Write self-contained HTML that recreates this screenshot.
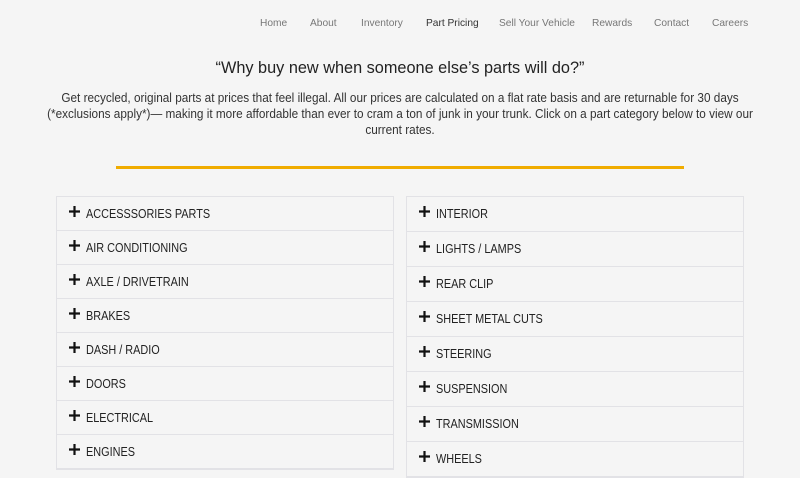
<!DOCTYPE html>
<html><head><meta charset="utf-8"><style>
*{margin:0;padding:0;box-sizing:border-box}
html,body{width:800px;height:450px;overflow:hidden;background:#f5f5f5;font-family:"Liberation Sans",sans-serif;color:#333}
.nav a{position:absolute;top:18px;font-size:10.2px;color:#777;text-decoration:none;white-space:nowrap}
h1{position:absolute;top:59px;left:0;width:800px;text-align:center;font-weight:normal;font-size:16.3px;color:#222}
p.intro{position:absolute;top:90px;left:0;width:800px;text-align:center;font-size:12.8px;line-height:16px;color:#333;white-space:nowrap;transform:scaleX(.92);transform-origin:400px 0}
.line{position:absolute;top:166px;left:116px;width:568px;height:3px;background:#f0ac00}
.col{position:absolute;top:196px;width:338px;border:1px solid #e2e2e6;background:#f5f5f5}
.row{border-bottom:1px solid #e2e2e6;position:relative;font-size:12.8px;color:#222;padding-left:29px}
.row span{display:inline-block;transform:scaleX(.85);transform-origin:left center}
.row svg{position:absolute;left:12px;top:50%;margin-top:-8px}
</style></head><body>
<div class="nav">
<a style="left:260px">Home</a><a style="left:310px">About</a><a style="left:361px">Inventory</a><a style="left:426px;color:#333">Part Pricing</a><a style="left:499px">Sell Your Vehicle</a><a style="left:592px">Rewards</a><a style="left:654px">Contact</a><a style="left:712px">Careers</a>
</div>
<h1>“Why buy new when someone else’s parts will do?”</h1>
<p class="intro">Get recycled, original parts at prices that feel illegal. All our prices are calculated on a flat rate basis and are returnable for 30 days<br>(*exclusions apply*)— making it more affordable than ever to cram a ton of junk in your trunk. Click on a part category below to view our<br>current rates.</p>
<div class="line"></div>
<div class="col" style="left:56px">
<div class="row" style="height:34px;line-height:33px"><svg width="11" height="11" viewBox="0 0 11 11"><path d="M5.5 0v11M0 5.5h11" stroke="#111" stroke-width="2.2"/></svg><span>ACCESSSORIES PARTS</span></div>
<div class="row" style="height:34px;line-height:33px"><svg width="11" height="11" viewBox="0 0 11 11"><path d="M5.5 0v11M0 5.5h11" stroke="#111" stroke-width="2.2"/></svg><span>AIR CONDITIONING</span></div>
<div class="row" style="height:34px;line-height:33px"><svg width="11" height="11" viewBox="0 0 11 11"><path d="M5.5 0v11M0 5.5h11" stroke="#111" stroke-width="2.2"/></svg><span>AXLE / DRIVETRAIN</span></div>
<div class="row" style="height:34px;line-height:33px"><svg width="11" height="11" viewBox="0 0 11 11"><path d="M5.5 0v11M0 5.5h11" stroke="#111" stroke-width="2.2"/></svg><span>BRAKES</span></div>
<div class="row" style="height:34px;line-height:33px"><svg width="11" height="11" viewBox="0 0 11 11"><path d="M5.5 0v11M0 5.5h11" stroke="#111" stroke-width="2.2"/></svg><span>DASH / RADIO</span></div>
<div class="row" style="height:34px;line-height:33px"><svg width="11" height="11" viewBox="0 0 11 11"><path d="M5.5 0v11M0 5.5h11" stroke="#111" stroke-width="2.2"/></svg><span>DOORS</span></div>
<div class="row" style="height:34px;line-height:33px"><svg width="11" height="11" viewBox="0 0 11 11"><path d="M5.5 0v11M0 5.5h11" stroke="#111" stroke-width="2.2"/></svg><span>ELECTRICAL</span></div>
<div class="row" style="height:34px;line-height:33px"><svg width="11" height="11" viewBox="0 0 11 11"><path d="M5.5 0v11M0 5.5h11" stroke="#111" stroke-width="2.2"/></svg><span>ENGINES</span></div>
</div>
<div class="col" style="left:406px">
<div class="row" style="height:35px;line-height:34px"><svg width="11" height="11" viewBox="0 0 11 11"><path d="M5.5 0v11M0 5.5h11" stroke="#111" stroke-width="2.2"/></svg><span>INTERIOR</span></div>
<div class="row" style="height:35px;line-height:34px"><svg width="11" height="11" viewBox="0 0 11 11"><path d="M5.5 0v11M0 5.5h11" stroke="#111" stroke-width="2.2"/></svg><span>LIGHTS / LAMPS</span></div>
<div class="row" style="height:35px;line-height:34px"><svg width="11" height="11" viewBox="0 0 11 11"><path d="M5.5 0v11M0 5.5h11" stroke="#111" stroke-width="2.2"/></svg><span>REAR CLIP</span></div>
<div class="row" style="height:35px;line-height:34px"><svg width="11" height="11" viewBox="0 0 11 11"><path d="M5.5 0v11M0 5.5h11" stroke="#111" stroke-width="2.2"/></svg><span>SHEET METAL CUTS</span></div>
<div class="row" style="height:35px;line-height:34px"><svg width="11" height="11" viewBox="0 0 11 11"><path d="M5.5 0v11M0 5.5h11" stroke="#111" stroke-width="2.2"/></svg><span>STEERING</span></div>
<div class="row" style="height:35px;line-height:34px"><svg width="11" height="11" viewBox="0 0 11 11"><path d="M5.5 0v11M0 5.5h11" stroke="#111" stroke-width="2.2"/></svg><span>SUSPENSION</span></div>
<div class="row" style="height:35px;line-height:34px"><svg width="11" height="11" viewBox="0 0 11 11"><path d="M5.5 0v11M0 5.5h11" stroke="#111" stroke-width="2.2"/></svg><span>TRANSMISSION</span></div>
<div class="row" style="height:35px;line-height:34px"><svg width="11" height="11" viewBox="0 0 11 11"><path d="M5.5 0v11M0 5.5h11" stroke="#111" stroke-width="2.2"/></svg><span>WHEELS</span></div>
</div>
</body></html>
